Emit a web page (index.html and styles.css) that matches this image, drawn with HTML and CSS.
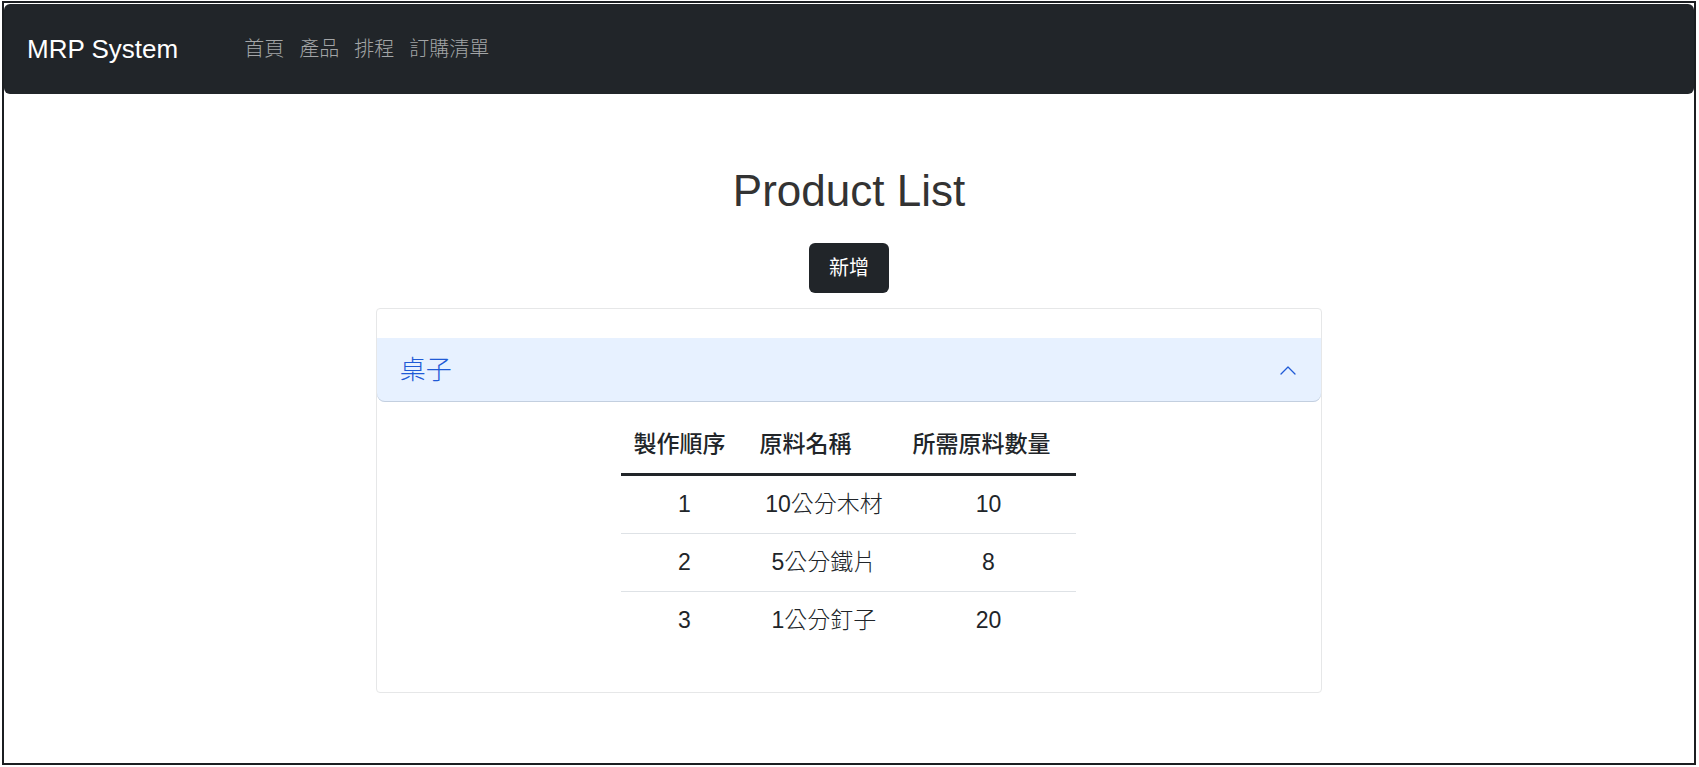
FILE: index.html
```html
<!DOCTYPE html>
<html lang="zh-Hant">
<head>
<meta charset="utf-8">
<meta name="viewport" content="width=device-width, initial-scale=1">
<title>MRP System</title>
<link rel="stylesheet" href="styles.css">
</head>
<body>
<div class="page">
  <header class="navbar">
    <a class="brand" href="#">MRP System</a>
    <nav class="nav">
      <a class="nav-link" href="#">首頁</a>
      <a class="nav-link" href="#">產品</a>
      <a class="nav-link" href="#">排程</a>
      <a class="nav-link" href="#">訂購清單</a>
    </nav>
  </header>
  <main class="content">
    <h1 class="title">Product List</h1>
    <button class="add-button" type="button">新增</button>
    <section class="accordion">
      <h2 class="accordion-header">
        <button class="accordion-toggle" type="button" aria-expanded="true" aria-controls="product-parts">
          <span>桌子</span>
          <svg class="chevron" viewBox="0 0 20 20" width="20" height="20" aria-hidden="true">
            <path d="M3 14 L10 7 L17 14" fill="none" stroke="currentColor" stroke-width="1.3" stroke-linecap="round" stroke-linejoin="round"/>
          </svg>
        </button>
      </h2>
      <div class="accordion-body" id="product-parts">
        <table class="parts">
          <thead>
            <tr><th class="col-order" scope="col">製作順序</th><th class="col-name" scope="col">原料名稱</th><th class="col-amount" scope="col">所需原料數量</th></tr>
          </thead>
          <tbody>
            <tr><td>1</td><td>10公分木材</td><td>10</td></tr>
            <tr><td>2</td><td>5公分鐵片</td><td>8</td></tr>
            <tr><td>3</td><td>1公分釘子</td><td>20</td></tr>
          </tbody>
        </table>
      </div>
    </section>
  </main>
</div>
</body>
</html>
```
FILE: styles.css
```css
* {
  box-sizing: border-box;
}

body {
  margin: 0;
  padding: 1px 3px 2px 2px;
  background: #fff;
  color: #212529;
  font-family: "Liberation Sans", "Noto Sans CJK TC", sans-serif;
  font-weight: 300;
}

.page {
  border: 2px solid #1b1e21;
}

.navbar {
  display: flex;
  align-items: center;
  gap: 66px;
  margin-top: 1px;
  padding: 25px 23px;
  border-radius: 6px;
  background: #212529;
}

.brand {
  color: #fff;
  font-size: 26px;
  line-height: 40px;
  text-decoration: none;
}

.nav {
  display: flex;
  gap: 15px;
}

.nav-link {
  color: #a3a5a7;
  font-size: 20px;
  line-height: 40px;
  text-decoration: none;
}

.content {
  display: flex;
  flex-direction: column;
  align-items: center;
  padding: 70px 0;
}

.title {
  margin: 0 0 26px;
  color: #333;
  font-size: 44px;
  font-weight: 400;
  line-height: 53px;
}

.add-button {
  padding: 10px 20px;
  border: 0;
  border-radius: 6px;
  background: #212529;
  color: #fff;
  font: inherit;
  font-size: 20px;
  font-weight: 400;
  line-height: 30px;
}

.accordion {
  width: 56%;
  margin-top: 15px;
  padding-top: 29px;
  border: 1px solid #e6e7e8;
  border-radius: 4px;
}

.accordion-header {
  margin: 0;
}

.accordion-toggle {
  display: flex;
  align-items: center;
  justify-content: space-between;
  width: 100%;
  padding: 12px 23px;
  border: 0;
  border-radius: 0 0 8px 8px;
  background: #e7f1ff;
  box-shadow: inset 0 -1px 0 #c3cfdf;
  color: #1f5ad6;
  font: inherit;
  font-weight: 300;
  font-size: 26px;
  line-height: 40px;
  text-align: left;
}

.chevron {
  display: block;
}

.accordion-body {
  display: flex;
  justify-content: center;
  padding: 12px 20px 43px;
}

.parts {
  border-collapse: collapse;
  font-size: 23px;
  line-height: 34px;
}

.parts th {
  padding: 13px 12px 12px;
  border-bottom: 3px solid #212529;
  font-weight: 500;
  text-align: left;
}

.parts td {
  padding: 11px 12px 12px;
  text-align: center;
}

.parts tr + tr td {
  border-top: 1px solid #dee2e6;
}

.col-order {
  width: 126px;
}

.col-name {
  width: 153px;
}

.col-amount {
  width: 176px;
}
```
